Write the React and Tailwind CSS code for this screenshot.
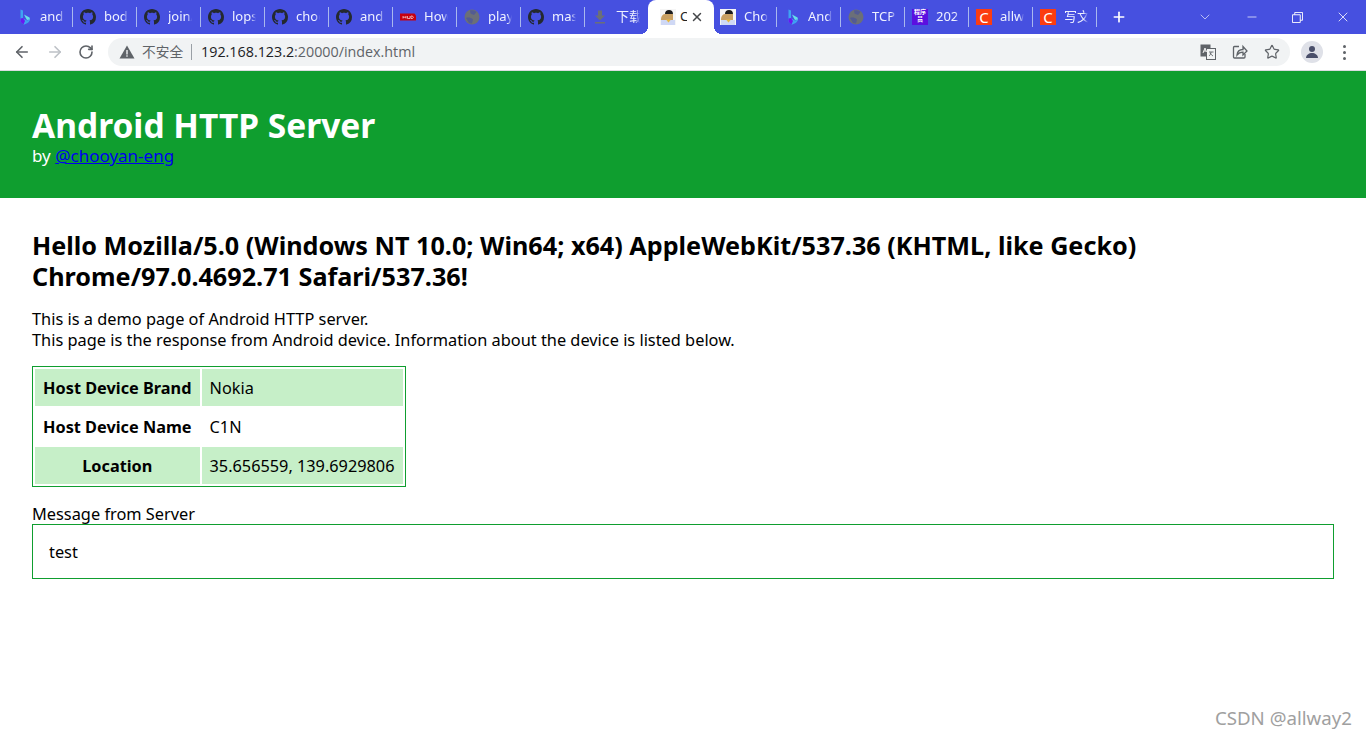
import React from "react";
import { ArrowLeft, ArrowRight, RotateCw, Star, ChevronDown, Minus, X, Plus } from "lucide-react";

function GithubIcon() {
  return (
    <svg viewBox="0 0 16 16" className="w-4 h-4 shrink-0" fill="#24292f">
      <path d="M8 0C3.58 0 0 3.58 0 8c0 3.54 2.29 6.53 5.47 7.59.4.07.55-.17.55-.38 0-.19-.01-.82-.01-1.49-2.01.37-2.53-.49-2.69-.94-.09-.23-.48-.94-.82-1.13-.28-.15-.68-.52-.01-.53.63-.01 1.08.58 1.23.82.72 1.21 1.87.87 2.33.66.07-.52.28-.87.51-1.07-1.78-.2-3.64-.89-3.64-3.95 0-.87.31-1.59.82-2.15-.08-.2-.36-1.02.08-2.12 0 0 .67-.21 2.2.82.64-.18 1.32-.27 2-.27s1.36.09 2 .27c1.53-1.04 2.2-.82 2.2-.82.44 1.1.16 1.92.08 2.12.51.56.82 1.27.82 2.15 0 3.07-1.87 3.75-3.65 3.95.29.25.54.73.54 1.48 0 1.07-.01 1.93-.01 2.2 0 .21.15.46.55.38A8.01 8.01 0 0 0 16 8c0-4.42-3.58-8-8-8z" />
    </svg>
  );
}

function BingIcon() {
  return (
    <svg viewBox="0 0 16 16" className="w-4 h-4 shrink-0">
      <path d="M4.500 0.500L7 1.500V9.500L11 11.500L14 10.500C13.800 13 10 15.500 7.500 15.500L4.500 13z" fill="#3fa2f2" />
      <path d="M8 5.500L13.500 8.500 14 10.500 11 11 9.500 8.500z" fill="#66e0e8" />
      <path d="M4.500 9.500L7 9 9 12 7.500 15.500 4.500 13z" fill="#6a18f0" />
    </svg>
  );
}

function HudIcon() {
  return (
    <svg viewBox="0 0 16 16" className="w-4 h-4 shrink-0">
      <path d="M0 4.500h14.500l1.500 2V11.500H0z" fill="#c8000f" />
      <path d="M3 7v2.500M6 7v2.500M3 8.200h3M7.500 7v2.500h2.500V7M11 7v2.500h1.500l.8-1-.8-1.500z" stroke="#fff" strokeWidth="0.6" fill="none" />
    </svg>
  );
}

function GlobeIcon() {
  return (
    <svg viewBox="0 0 16 16" className="w-4 h-4 shrink-0">
      <circle cx="8" cy="8" r="7.500" fill="#6b6f78" />
      <path d="M6 1.500c2-.5 5 0 6.500 1.500L10 6 6.500 4.500zM2 9c2-1 5-.5 7 1.500L8 14.500 5 14z" fill="#3f4aa8" opacity="0.55" />
    </svg>
  );
}

function DownloadIcon() {
  return (
    <svg viewBox="0 0 16 16" className="w-4 h-4 shrink-0" fill="#6b6f78">
      <path d="M6 1.500h4V6.500h3L8 11.500 3 6.500h3zM3 13h10v1.500H3z" />
    </svg>
  );
}

function AvatarIcon() {
  return (
    <svg viewBox="0 0 16 16" className="w-4 h-4 shrink-0">
      <rect width="16" height="16" fill="#f5f5f5" />
      <path d="M5 5c0-2.500 1.500-4 4-4s4 1.500 4 4z" fill="#1c1c1c" />
      <path d="M1 10c0-3 2-5 4-5h8v6H1z" fill="#c9a063" />
      <path d="M1 11h14v5H1z" fill="#cfd8f5" />
      <path d="M6 10.500h5l-2.500 3z" fill="#e8b840" />
    </svg>
  );
}

function CsdnIcon() {
  return (
    <span className="w-4 h-4 shrink-0 bg-[#fc3c10] text-white text-[15px] leading-4 text-center">C</span>
  );
}

function PurpleIcon() {
  return (
    <span className="w-4 h-4 shrink-0 bg-[#5b0fe0] text-white text-[6px] leading-[7px] text-center font-bold">程序员</span>
  );
}

const gh = <GithubIcon />;
const bing = <BingIcon />;

const tabs = [
  { icon: bing, title: "android" },
  { icon: gh, title: "bodhi" },
  { icon: gh, title: "join/" },
  { icon: gh, title: "lopsided" },
  { icon: gh, title: "chooyan" },
  { icon: gh, title: "android" },
  { icon: <HudIcon />, title: "How" },
  { icon: <GlobeIcon />, title: "play" },
  { icon: gh, title: "master" },
  { icon: <DownloadIcon />, title: "下载内容", noSep: true },
  { active: true, icon: <AvatarIcon />, title: "Chooyan" },
  { icon: <AvatarIcon />, title: "Chooyan" },
  { icon: bing, title: "Android" },
  { icon: <GlobeIcon />, title: "TCP" },
  { icon: <PurpleIcon />, title: "2021" },
  { icon: <CsdnIcon />, title: "allway2" },
  { icon: <CsdnIcon />, title: "写文章" },
];

function Tab({ tab }) {
  if (tab.active) {
    return (
      <div className="relative w-[66px] h-[34px] shrink-0 -ml-px -mr-px bg-white rounded-t-lg flex items-center pl-3 text-[13px] text-[#222]">
        <span className="absolute bottom-0 -left-2 w-2 h-2 bg-[radial-gradient(circle_at_0_0,#4650e0_8px,white_8px)]" />
        <span className="absolute bottom-0 -right-2 w-2 h-2 bg-[radial-gradient(circle_at_100%_0,#4650e0_8px,white_8px)]" />
        {tab.icon}
        <span className="ml-1 w-[7px] overflow-hidden whitespace-nowrap">C</span>
        <X size={14} strokeWidth={2.5} className="ml-[3px] text-[#45474a]" />
      </div>
    );
  }
  return (
    <div className="w-16 h-[34px] shrink-0 flex items-center pl-[7px] text-[13px] text-[#eef1ff]">
      {tab.icon}
      <span className="ml-2 w-[24px] overflow-hidden whitespace-nowrap [mask-image:linear-gradient(to_right,black_80%,transparent)]">
        {tab.title}
      </span>
      {!tab.noSep && <span className="ml-auto w-px h-5 bg-[#a9b8ee]" />}
    </div>
  );
}

function ChromeBar() {
  return (
    <div className="font-['Noto_Sans','Noto_Sans_CJK_SC',sans-serif]">
      <div className="h-[34px] bg-[#4650e0] flex items-center pl-[9px]">
        {tabs.map((t, i) => (
          <Tab key={i} tab={t} />
        ))}
        <Plus size={16} strokeWidth={2.5} className="ml-[14px] text-white" />
        <ChevronDown size={16} strokeWidth={1.2} className="ml-[70px] text-[#d5d9f7]" />
        <Minus size={14} strokeWidth={1.2} className="ml-[32px] text-white" />
        <svg viewBox="0 0 12 12" className="ml-[33px] w-[11px] h-[11px]" fill="none" stroke="#fff">
          <path d="M.5 3h8.500v8.500H.5zM3 3V.5h8.500V9H9" />
        </svg>
        <X size={16} strokeWidth={1.2} className="ml-[32px] text-white" />
      </div>
      <div className="h-9 bg-white flex items-center border-b border-b-[#dadce0] box-content">
        <ArrowLeft size={18} strokeWidth={2.2} className="ml-[13px] text-[#5f6368]" />
        <ArrowRight size={18} strokeWidth={2.2} className="ml-[15px] text-[#bdc1c6]" />
        <RotateCw size={16} strokeWidth={2.4} className="ml-[14px] text-[#5f6368]" />
        <div className="ml-[14px] w-[1182px] h-7 bg-[#f1f3f4] rounded-full flex items-center pl-[11px]">
          <svg viewBox="0 0 16 16" className="w-4 h-4 shrink-0" fill="#5f6368">
            <path d="M8 1.500L15.500 14.500H.5z" />
            <rect x="7.300" y="6" width="1.400" height="4.500" fill="#f1f3f4" />
            <rect x="7.300" y="11.300" width="1.400" height="1.400" fill="#f1f3f4" />
          </svg>
          <span className="ml-[7px] text-[13.7px] text-[#5f6368]">不安全</span>
          <span className="ml-2 w-px h-4 bg-[#9aa0a6]" />
          <span className="ml-[9px] text-[14.3px] text-[#202124] font-['Open_Sans','Noto_Sans',sans-serif]">
            192.168.123.2<span className="text-[#5f6368]">:20000/index.html</span>
          </span>
          <div className="ml-auto mr-[10px] flex items-center gap-4">
            <svg viewBox="0 0 16 16" className="w-4 h-4">
              <rect x="0.500" y="0.500" width="10" height="12" fill="#5f6368" />
              <rect x="6.500" y="4.500" width="9" height="11" fill="#f1f3f4" stroke="#5f6368" />
              <path d="M3 9l2-5 1.500 4M3.800 7h2.500" fill="none" stroke="#fff" strokeWidth="0.9" />
              <path d="M9 8h4.500M11 8c0 2-1 3-2 4M10 9c1 1.500 2 2.500 3 3" fill="none" stroke="#5f6368" strokeWidth="0.9" />
            </svg>
            <svg viewBox="0 0 16 16" className="w-4 h-4" fill="none" stroke="#5f6368" strokeWidth="1.300">
              <path d="M7 2.500H2.500a1 1 0 0 0-1 1V13a1 1 0 0 0 1 1h9.500a1 1 0 0 0 1-1v-3" />
              <path d="M5 11c.3-3.500 2.500-5.500 6-5.500V2.500l4 4.500-4 4V8.200c-2.500 0-4.500.8-6 2.800z" />
            </svg>
            <Star size={16} strokeWidth={1.8} className="text-[#5f6368]" />
          </div>
        </div>
        <div className="ml-[11px] w-[22px] h-[22px] rounded-full bg-[#dfe1e8] flex items-center justify-center">
          <svg viewBox="0 0 14 14" className="w-[14px] h-[14px]" fill="#4a4f6a">
            <circle cx="7" cy="4" r="3" />
            <path d="M1 13c0-3 3-5 6-5s6 2 6 5z" />
          </svg>
        </div>
        <div className="ml-5 flex flex-col gap-[3px]">
          <span className="w-[3px] h-[3px] rounded-full bg-[#5f6368]" />
          <span className="w-[3px] h-[3px] rounded-full bg-[#5f6368]" />
          <span className="w-[3px] h-[3px] rounded-full bg-[#5f6368]" />
        </div>
      </div>
    </div>
  );
}

const rows = [
  { label: "Host Device Brand", value: "Nokia", green: true },
  { label: "Host Device Name", value: "C1N" },
  { label: "Location", value: "35.656559, 139.6929806", green: true },
];

export default function App() {
  return (
    <div className="relative h-[738px] overflow-hidden bg-white text-black">
      <ChromeBar />
      <div className="font-['Noto_Sans','Noto_Sans_CJK_SC',sans-serif] text-[16.35px]">
        <header className="h-[127px] bg-[#0f9e2f] pl-8 pt-[34px] text-white">
          <h1 className="text-[33.5px] leading-10 font-bold">Android HTTP Server</h1>
          <p className="text-[17px] leading-[21px]">
            by <a className="text-[#0000ee] underline">@chooyan-eng</a>
          </p>
        </header>
        <main className="px-8 pt-8">
          <h2 className="text-[25.2px] leading-[31px] font-bold">
            Hello Mozilla/5.0 (Windows NT 10.0; Win64; x64) AppleWebKit/537.36 (KHTML, like Gecko)
            <br />
            Chrome/97.0.4692.71 Safari/537.36!
          </h2>
          <p className="mt-[17px] leading-[21px]">
            This is a demo page of Android HTTP server.
            <br />
            This page is the response from Android device. Information about the device is listed below.
          </p>
          <table className="mt-[15px] text-[16.3px] border border-[#0f9e2f] border-separate border-spacing-[2px]">
            <tbody>
              {rows.map((r) => (
                <tr key={r.label} className={r.green ? "bg-[#c6efc8]" : ""}>
                  <th className="h-[37px] pt-px px-[8px] font-bold text-center">{r.label}</th>
                  <td className="h-[37px] pt-px px-[8px]">{r.value}</td>
                </tr>
              ))}
            </tbody>
          </table>
          <p className="mt-[17px] leading-5">Message from Server</p>
          <div className="h-[55px] border border-[#0f9e2f] pl-4 pt-px flex items-center">test</div>
        </main>
      </div>
      <span className="absolute right-[14px] bottom-[6px] text-[18.7px] text-[#a0a0a0] font-['Noto_Sans',sans-serif]">CSDN @allway2</span>
    </div>
  );
}
